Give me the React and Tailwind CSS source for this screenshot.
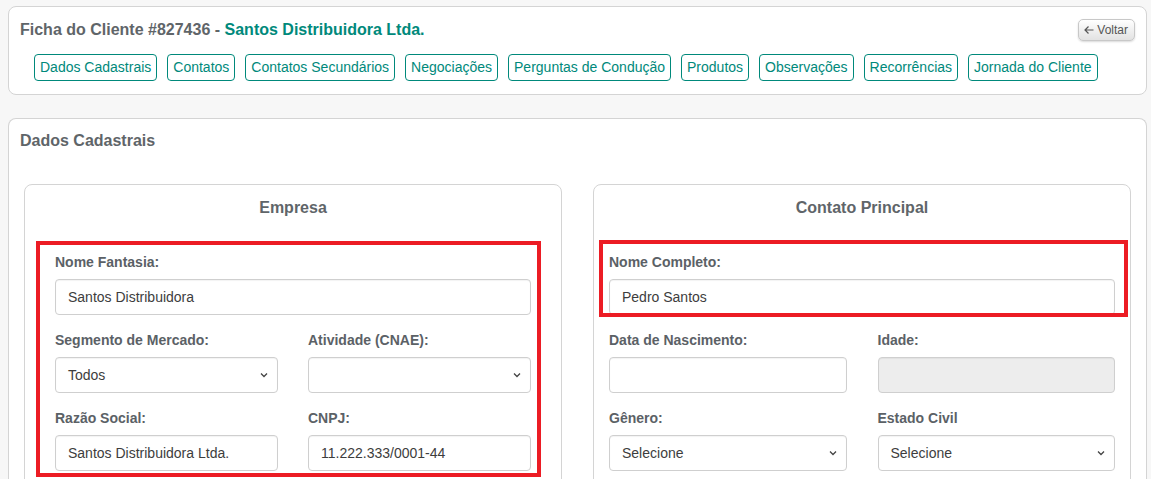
import React from "react";

const tabs = [
  "Dados Cadastrais",
  "Contatos",
  "Contatos Secundários",
  "Negociações",
  "Perguntas de Condução",
  "Produtos",
  "Observações",
  "Recorrências",
  "Jornada do Cliente",
];

function Chevron() {
  return (
    <svg width="10" height="10" viewBox="0 0 10 10" className="absolute right-[8px] top-1/2 -translate-y-1/2">
      <path d="M2 3.5 L5 6.5 L8 3.5" fill="none" stroke="#444" strokeWidth="1.3" />
    </svg>
  );
}

function Field({ label, value, select, disabled, last }) {
  return (
    <div className={last ? "" : "mb-[15px]"}>
      <div className="text-[14px] font-bold text-[#5b6166] leading-[20px] mb-[7px]">{label}</div>
      <div
        className={
          "relative h-[36px] rounded-[4px] border border-[#cfcfcf] flex items-center px-[12px] text-[14px] text-[#3d3d3d] shadow-[inset_0_1px_1px_rgba(0,0,0,0.05)] " +
          (disabled ? "bg-[#ededed]" : "bg-white")
        }
      >
        {value}
        {select && <Chevron />}
      </div>
    </div>
  );
}

export default function App() {
  return (
    <div className="min-h-[479px] bg-[#f7f7f7] pt-[6px] pl-[8px] pr-[4px]" style={{ fontFamily: '"Liberation Sans", Arial, sans-serif' }}>
      <div className="bg-white border border-[#d4d4d4] rounded-[8px] pt-[13px] pb-[13px] pl-[11px] pr-[11px]">
        <div className="flex items-start justify-between h-[20px]">
          <div className="text-[16px] font-bold leading-[20px] text-[#5f6569]">
            Ficha do Cliente #827436 - <span className="text-[#00897b]">Santos Distribuidora Ltda.</span>
          </div>
          <div className="mt-[-1px] h-[22px] pl-[5px] pr-[6px] flex items-center gap-[3px] rounded-[5px] border border-[#c8c8c8] bg-gradient-to-b from-white to-[#e2e2e2] shadow-[0_1px_2px_rgba(0,0,0,0.15)] text-[12px] text-[#555]">
            <svg width="10" height="10" viewBox="0 0 10 10">
              <path d="M9.5 5 H1 M4.5 1.5 L1 5 L4.5 8.5" fill="none" stroke="#555" strokeWidth="1.2" />
            </svg>
            Voltar
          </div>
        </div>
        <div className="flex gap-[10px] mt-[14px] ml-[14px]">
          {tabs.map((t) => (
            <div key={t} className="h-[27px] px-[5px] flex items-center border border-[#00897b] rounded-[4px] text-[14px] text-[#00897b] bg-white">
              {t}
            </div>
          ))}
        </div>
      </div>

      <div className="mt-[23px] bg-white border border-[#d4d4d4] rounded-t-[8px] border-b-0 pt-[12px] px-[15px] pb-[20px]">
        <div className="text-[16px] font-bold leading-[20px] text-[#5f6569] -ml-[4px]">Dados Cadastrais</div>
        <div className="grid grid-cols-[538px_538px] gap-[31px] mt-[33px]">
          <div className="relative border border-[#d4d4d4] rounded-[8px] pt-[13px] px-[30px] pb-[20px]">
            <div className="text-center text-[16px] font-bold leading-[20px] text-[#5f6569] mb-[34px]">Empresa</div>
            <Field label="Nome Fantasia:" value="Santos Distribuidora" />
            <div className="grid grid-cols-2 gap-x-[30px]">
              <Field label="Segmento de Mercado:" value="Todos" select />
              <Field label="Atividade (CNAE):" value="" select />
              <Field label="Razão Social:" value="Santos Distribuidora Ltda." last />
              <Field label="CNPJ:" value="11.222.333/0001-44" last />
            </div>
            <div className="absolute left-[11px] top-[56px] w-[505px] h-[236px] border-[4px] border-[#ec1c24] pointer-events-none" />
          </div>
          <div className="relative border border-[#d4d4d4] rounded-[8px] pt-[13px] px-[15px] pb-[20px]">
            <div className="text-center text-[16px] font-bold leading-[20px] text-[#5f6569] mb-[34px]">Contato Principal</div>
            <Field label="Nome Completo:" value="Pedro Santos" />
            <div className="grid grid-cols-2 gap-x-[31px]">
              <Field label="Data de Nascimento:" value="" />
              <Field label="Idade:" value="" disabled />
              <Field label="Gênero:" value="Selecione" select last />
              <Field label="Estado Civil" value="Selecione" select last />
            </div>
            <div className="absolute left-[5px] top-[55px] w-[529px] h-[77px] border-[4px] border-[#ec1c24] pointer-events-none" />
          </div>
        </div>
      </div>
    </div>
  );
}
